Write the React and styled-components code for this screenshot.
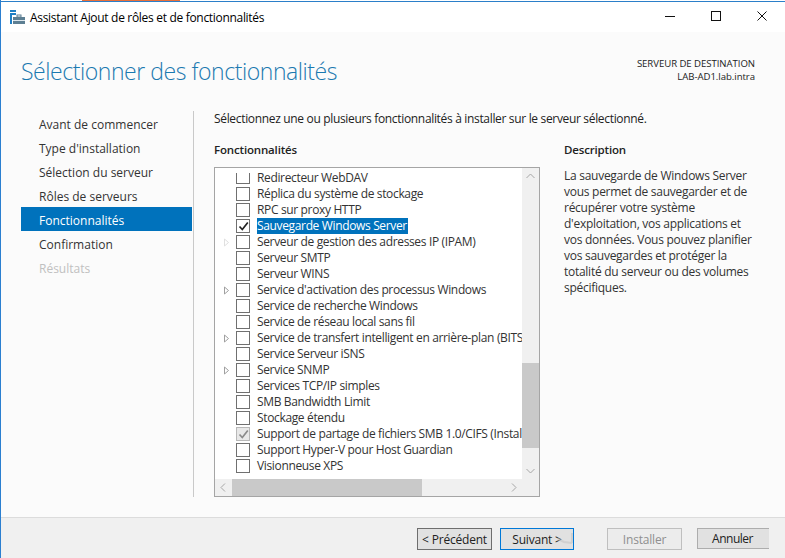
import React from "react";
import styled, { createGlobalStyle } from "styled-components";

const Global = createGlobalStyle`
  html, body { margin: 0; padding: 0; background: #fbfbfb; }
  body { font-family: "Open Sans", "Noto Sans", sans-serif; }
  * { box-sizing: border-box; }
`;

const Windowed = styled.div`
  width: 785px; height: 558px; display: flex; flex-direction: column; overflow: hidden;
  background: #fbfbfb; border-left: 1px solid #2b7fd0;
`;
const TopEdge = styled.div`
  height: 2px; flex: none; background: #fff; border-bottom: 1px solid #2b7fc9; margin-left: -1px; position: relative;
`;
const Accent = styled.span`
  position: absolute; top: 0; left: 82px; width: 98px; height: 1px; background: #e8703a;
`;
const TitleBar = styled.div`
  height: 30px; flex: none; background: #fff; display: flex; align-items: center; padding-left: 9px;
`;
const TitleText = styled.span`
  font-size: 12px; color: #000; margin-left: 5px; letter-spacing: -0.31px; white-space: nowrap; flex: 1;
`;
const Controls = styled.div`
  display: flex; align-items: center; margin-top: -2px;
`;
const Control = styled.div`
  width: 46px; height: 30px; display: flex; align-items: center; justify-content: center;
`;
const Header = styled.div`
  height: 79px; flex: none; display: flex; justify-content: space-between; padding: 0 30px 0 20px;
`;
const Heading = styled.h1`
  margin: 24px 0 0; font-size: 23px; font-weight: 300; line-height: 30px; color: #1b79b0; letter-spacing: -0.44px; white-space: nowrap;
`;
const Dest = styled.div`
  margin-top: 25px; text-align: right; font-size: 9.6px; line-height: 13px; color: #222; letter-spacing: -0.05px;
`;
const Body = styled.div`
  flex: 1; display: flex; min-height: 0; padding-left: 20px;
`;
const Sidebar = styled.nav`
  width: 173px; flex: none; height: 386px; border-right: 1px solid #c9c9c9; margin-right: 20px;
`;
const Step = styled.div`
  height: 24px; width: 171px; padding: 2px 0 0 18px; display: flex; align-items: center; font-size: 12px; letter-spacing: 0;
  color: ${p => p.$active ? "#fff" : p.$disabled ? "#c0c0c0" : "#333"};
  background: ${p => p.$active ? "#0072bc" : "transparent"};
`;
const Content = styled.div`
  flex: 1; display: flex; flex-direction: column; min-width: 0;
`;
const Intro = styled.div`
  font-size: 12px; line-height: 16px; height: 31px; color: #222; letter-spacing: -0.33px; white-space: nowrap;
`;
const Columns = styled.div`
  display: flex; gap: 24px;
`;
const FeatureColumn = styled.div`
  width: 326px; flex: none;
`;
const ColumnTitle = styled.div`
  font-size: 11.5px; font-weight: 600; line-height: 16px; height: 25px; color: #222; letter-spacing: -0.16px;
`;
const ListBox = styled.div`
  position: relative; width: 326px; height: 330px; border: 1px solid #a5a5a5; background: #fff; overflow: hidden;
`;
const Rows = styled.div`
  height: 311px; width: 307px; overflow: hidden; display: flex; flex-direction: column; padding-top: 2px;
`;
const Row = styled.div`
  height: 16px; flex: none; display: flex; align-items: center; padding-left: 5px;
`;
const Expander = styled.span`
  width: 13px; margin-right: 3px; flex: none; height: 16px; display: flex; align-items: center; justify-content: center;
`;
const Box = styled.span`
  width: 14px; height: ${p => p.$clip ? 11 : 14}px; flex: none; border: 1px solid ${p => p.$dim ? "#b8b8b8" : "#707070"};
  ${p => p.$clip ? "border-top: none; margin-top: 1px;" : ""}
  background: ${p => p.$dim ? "#e8e8e8" : "#fff"}; display: flex; align-items: center; justify-content: center;
  margin-right: 7px;
`;
const RowLabel = styled.span`
  font-size: 12px; line-height: 16px; height: 16px; white-space: nowrap; letter-spacing: -0.35px; padding: 0 1px 0 0;
  color: ${p => p.$sel ? "#fff" : "#333"}; background: ${p => p.$sel ? "#0072bc" : "transparent"};
`;
const VTrack = styled.div`
  position: absolute; right: 0; top: 0; width: 17px; bottom: 0; background: #f0f0f0;
`;
const VThumb = styled.div`
  position: absolute; left: 0; right: 0; top: 195px; height: 85px; background: #c9c9c9;
`;
const HTrack = styled.div`
  position: absolute; left: 0; right: 0; bottom: 0; height: 17px; background: #f0f0f0;
`;
const HThumb = styled.div`
  position: absolute; left: 17px; top: 0; bottom: 0; width: 190px; background: #c9c9c9;
`;
const ArrowSlot = styled.span`
  position: absolute; display: flex; width: 17px; height: 17px; align-items: center; justify-content: center;
  ${p => p.$pos}
`;
const DescColumn = styled.div`
  width: 195px; flex: none;
`;
const DescText = styled.p`
  margin: 0; padding-top: 1px; font-size: 12px; line-height: 16px; color: #333; letter-spacing: -0.27px; white-space: pre-line;
`;
const Footer = styled.div`
  height: 41px; flex: none; background: #f0f0f0; border-top: 1px solid #dcdcdc; display: flex; align-items: flex-start;
  padding: 10px 0 0 416px;
`;
const Btn = styled.div`
  width: ${p => p.$w || 75}px; height: ${p => p.$plain ? 21 : 22}px; display: flex; align-items: center; justify-content: center; font-size: 12px;
  background: ${p => p.$disabled ? "#ececec" : "#e1e1e1"}; letter-spacing: -0.2px; margin-right: ${p => p.$gap || 0}px;
  border: 1px solid ${p => p.$focus ? "#0078d7" : p.$disabled ? "#bfbfbf" : p.$plain ? "#adadad" : "#6e6e6e"};
  color: ${p => p.$disabled ? "#8f8f8f" : "#222"};
  ${p => p.$plain ? "border-right: none; letter-spacing: -0.5px; padding-right: 2px;" : ""}
`;
const NextWrap = styled.div`
  position: relative; margin-right: 33px;
`;
const CursorTrail = styled.svg`
  position: absolute; left: 50px; top: 2px; width: 28px; height: 16px;
`;

const Chevron = ({ d }) => (
  <svg width="9" height="9" viewBox="0 0 9 9" fill="none" stroke="#a6a6a6" strokeWidth="1"><path d={d} /></svg>
);
const Tri = ({ faint }) => (
  <svg width="7" height="9" viewBox="0 0 7 9" fill="#fff" stroke={faint ? "#e0e0e0" : "#a0a0a0"} strokeWidth="1"><path d="M1.500 1v7l4-3.500z" /></svg>
);
const Check = ({ color }) => (
  <svg width="11" height="11" viewBox="0 0 11 11" fill="none" stroke={color} strokeWidth="1.7"><path d="M1.500 5.500l2.800 3L9.800 1.500" /></svg>
);

const steps = ["Avant de commencer", "Type d'installation", "Sélection du serveur", "Rôles de serveurs", "Fonctionnalités", "Confirmation", "Résultats"];
const features = [
  ["Redirecteur WebDAV", "clip"],
  ["Réplica du système de stockage"],
  ["RPC sur proxy HTTP"],
  ["Sauvegarde Windows Server", "sel"],
  ["Serveur de gestion des adresses IP (IPAM)", "faint"],
  ["Serveur SMTP"],
  ["Serveur WINS"],
  ["Service d'activation des processus Windows", "exp"],
  ["Service de recherche Windows"],
  ["Service de réseau local sans fil"],
  ["Service de transfert intelligent en arrière-plan (BITS)", "exp"],
  ["Service Serveur iSNS"],
  ["Service SNMP", "exp"],
  ["Services TCP/IP simples"],
  ["SMB Bandwidth Limit"],
  ["Stockage étendu"],
  ["Support de partage de fichiers SMB 1.0/CIFS (Installé)", "dim"],
  ["Support Hyper-V pour Host Guardian"],
  ["Visionneuse XPS"],
];

export default function App() {
  return (
    <Windowed>
      <Global />
      <TopEdge><Accent /></TopEdge>
      <TitleBar>
        <svg width="15" height="15" viewBox="0 0 15 15">
          <rect x="0" y="0" width="6" height="2" fill="#1f7fc4" />
          <rect x="0" y="3" width="6" height="2" fill="#1f7fc4" />
          <rect x="0" y="5" width="2" height="9" fill="#1f7fc4" />
          <rect x="3" y="7" width="12" height="7" fill="#5d7f93" />
          <rect x="3" y="10" width="12" height="1" fill="#dfe8ee" />
          <rect x="7" y="5" width="4" height="2" fill="none" stroke="#5d7f93" />
        </svg>
        <TitleText>Assistant Ajout de rôles et de fonctionnalités</TitleText>
        <Controls>
          <Control><svg width="10" height="10" viewBox="0 0 10 10"><path d="M0 5.500h10" stroke="#111" /></svg></Control>
          <Control><svg width="10" height="10" viewBox="0 0 10 10" fill="none"><rect x=".5" y=".5" width="9" height="9" stroke="#111" /></svg></Control>
          <Control><svg width="10" height="10" viewBox="0 0 10 10" fill="none"><path d="M.5.5l9 9M9.500.5l-9 9" stroke="#111" /></svg></Control>
        </Controls>
      </TitleBar>
      <Header>
        <Heading>Sélectionner des fonctionnalités</Heading>
        <Dest>SERVEUR DE DESTINATION<br />LAB-AD1.lab.intra</Dest>
      </Header>
      <Body>
        <Sidebar>
          {steps.map((s, i) => <Step key={s} $active={i === 4} $disabled={i === 6}>{s}</Step>)}
        </Sidebar>
        <Content>
          <Intro>Sélectionnez une ou plusieurs fonctionnalités à installer sur le serveur sélectionné.</Intro>
          <Columns>
            <FeatureColumn>
              <ColumnTitle>Fonctionnalités</ColumnTitle>
              <ListBox>
                <Rows>
                  {features.map(([label, flag]) => (
                    <Row key={label}>
                      <Expander>{flag === "exp" && <Tri />}{flag === "faint" && <Tri faint />}</Expander>
                      <Box $dim={flag === "dim"} $clip={flag === "clip"}>
                        {flag === "sel" && <Check color="#222" />}
                        {flag === "dim" && <Check color="#8a8a8a" />}
                      </Box>
                      <RowLabel $sel={flag === "sel"}>{label}</RowLabel>
                    </Row>
                  ))}
                </Rows>
                <VTrack>
                  <VThumb />
                  <ArrowSlot $pos="top:0;left:0;"><Chevron d="M.5 6L4.500 2l4 4" /></ArrowSlot>
                  <ArrowSlot $pos="bottom:17px;left:0;"><Chevron d="M.5 3l4 4 4-4" /></ArrowSlot>
                </VTrack>
                <HTrack>
                  <HThumb />
                  <ArrowSlot $pos="top:0;left:0;"><Chevron d="M6 .5L2 4.500l4 4" /></ArrowSlot>
                  <ArrowSlot $pos="top:0;right:17px;"><Chevron d="M3 .5l4 4-4 4" /></ArrowSlot>
                </HTrack>
              </ListBox>
            </FeatureColumn>
            <DescColumn>
              <ColumnTitle>Description</ColumnTitle>
              <DescText>{"La sauvegarde de Windows Server\nvous permet de sauvegarder et de\nrécupérer votre système\nd'exploitation, vos applications et\nvos données. Vous pouvez planifier\nvos sauvegardes et protéger la\ntotalité du serveur ou des volumes\nspécifiques."}</DescText>
            </DescColumn>
          </Columns>
        </Content>
      </Body>
      <Footer>
        <Btn $gap={8}>&lt; Précédent</Btn>
        <NextWrap>
          <Btn $focus $w={74}>Suivant &gt;</Btn>
          <CursorTrail viewBox="0 0 28 16" fill="none">
            <path d="M8 9l6 3 8 1M22 3v10" stroke="#c4c4c4" strokeWidth="2" opacity=".6" />
          </CursorTrail>
        </NextWrap>
        <Btn $disabled $gap={15}>Installer</Btn>
        <Btn $plain $w={72}>Annuler</Btn>
      </Footer>
    </Windowed>
  );
}
